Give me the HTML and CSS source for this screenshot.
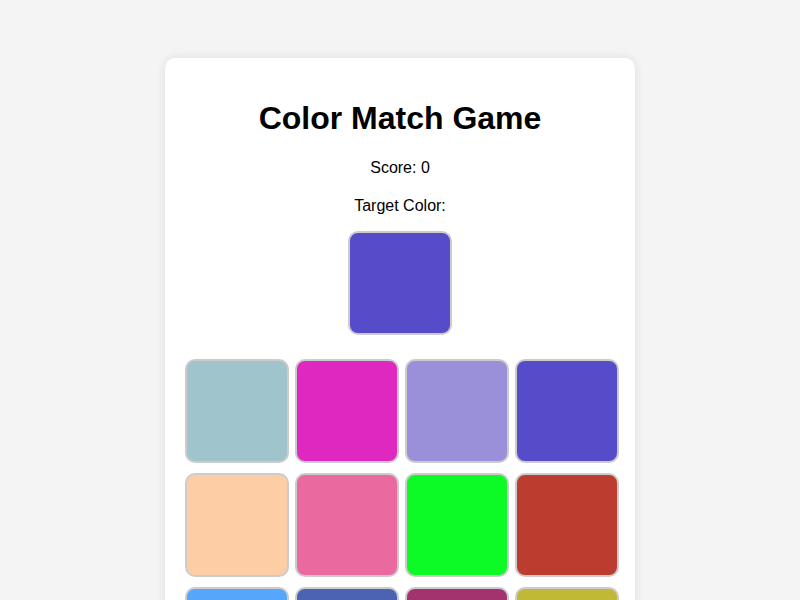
FILE: index.html
```html
<!DOCTYPE html>
<html>
<head>
<meta charset="utf-8">
<title>Color Match Game</title>
<link rel="stylesheet" href="styles.css">
</head>
<body>
<div class="card">
  <h1 class="title">Color Match Game</h1>
  <p class="score">Score: 0</p>
  <p class="label">Target Color:</p>
  <div class="target" style="background:#564cc9"></div>
  <div class="grid">
    <div class="tile" style="background:#9fc4cb"></div>
    <div class="tile" style="background:#df28bf"></div>
    <div class="tile" style="background:#9a8fd9"></div>
    <div class="tile" style="background:#564cc9"></div>
    <div class="tile" style="background:#fdcea6"></div>
    <div class="tile" style="background:#ea6a9f"></div>
    <div class="tile" style="background:#0cfa26"></div>
    <div class="tile" style="background:#bd3c30"></div>
    <div class="tile" style="background:#56a6fc"></div>
    <div class="tile" style="background:#4b63b2"></div>
    <div class="tile" style="background:#a3336f"></div>
    <div class="tile" style="background:#c0b935"></div>
    <div class="tile" style="background:#6fb08a"></div>
    <div class="tile" style="background:#e08d3c"></div>
    <div class="tile" style="background:#3c8fa0"></div>
    <div class="tile" style="background:#8c5ad0"></div>
  </div>
</div>
</body>
</html>
```

FILE: styles.css
```css
html, body {
  margin: 0;
  padding: 0;
}
body {
  background: #f4f4f4;
  font-family: "Liberation Sans", Arial, sans-serif;
  color: #000;
  padding-top: 58px;
}
.card {
  width: 430px;
  margin: 0 auto;
  padding: 20px;
  background: #fff;
  border-radius: 10px;
  box-shadow: 0 0 10px rgba(0, 0, 0, 0.1);
  text-align: center;
}
.title {
  font-size: 32px;
  font-weight: bold;
  margin: 22px 0 22px;
}
.score, .label {
  font-size: 16px;
  margin: 20px 0;
}
.label {
  margin-bottom: 16px;
}
.target {
  width: 100px;
  height: 100px;
  margin: 0 auto 24px;
  border: 2px solid #ccc;
  border-radius: 10px;
}
.grid {
  display: grid;
  grid-template-columns: repeat(4, 100px);
  gap: 10px;
}
.tile {
  width: 100px;
  height: 100px;
  border: 2px solid #ccc;
  border-radius: 10px;
}
```
